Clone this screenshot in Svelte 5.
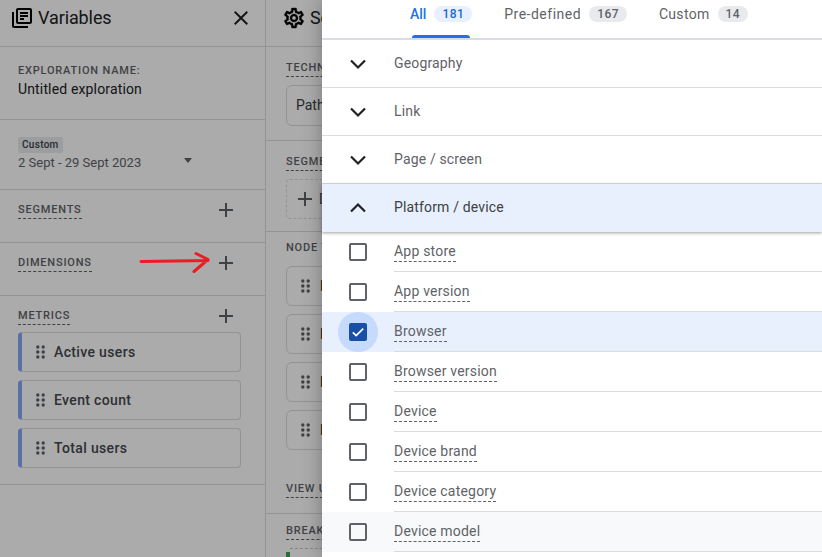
<script>
  const metrics = ['Active users', 'Event count', 'Total users'];
  const nodes = ['Event name', 'Page title', 'Page path', 'Platform'];
  const groups = ['Geography', 'Link', 'Page / screen'];
  const options = [
    { name: 'App store' },
    { name: 'App version' },
    { name: 'Browser', checked: true },
    { name: 'Browser version' },
    { name: 'Device' },
    { name: 'Device brand' },
    { name: 'Device category' },
    { name: 'Device model', hover: true }
  ];
</script>

<div class="page">
  <aside class="variables">
    <header class="head">
      <svg class="head-icon" viewBox="0 0 24 24" width="24" height="24"><path d="M4 6H2v14c0 1.100.9 2 2 2h14v-2H4V6zm16-4H8c-1.100 0-2 .9-2 2v12c0 1.100.9 2 2 2h12c1.100 0 2-.9 2-2V4c0-1.100-.9-2-2-2zm0 14H8V4h12v12zM10 9h8v2h-8V9zm0 3h4v2h-4v-2zm0-6h8v2h-8V6z"/></svg>
      <h1>Variables</h1>
      <svg class="close" viewBox="0 0 24 24" width="24" height="24"><path d="M19 6.410 17.590 5 12 10.590 6.410 5 5 6.410 10.590 12 5 17.590 6.410 19 12 13.410 17.590 19 19 17.590 13.410 12z"/></svg>
    </header>
    <section class="name">
      <div class="label">EXPLORATION NAME:</div>
      <div class="value">Untitled exploration</div>
    </section>
    <section class="date">
      <span class="chip">Custom</span>
      <div class="date-row"><span>2 Sept - 29 Sept 2023</span><i class="caret"></i></div>
    </section>
    <section class="var-row"><span class="label dashed">SEGMENTS</span><svg class="plus" viewBox="0 0 24 24" width="24" height="24"><path d="M19 13h-6v6h-2v-6H5v-2h6V5h2v6h6z"/></svg></section>
    <section class="var-row"><span class="label dashed">DIMENSIONS</span><svg class="plus" viewBox="0 0 24 24" width="24" height="24"><path d="M19 13h-6v6h-2v-6H5v-2h6V5h2v6h6z"/></svg></section>
    <section class="metrics">
      <div class="var-row inner"><span class="label dashed">METRICS</span><svg class="plus" viewBox="0 0 24 24" width="24" height="24"><path d="M19 13h-6v6h-2v-6H5v-2h6V5h2v6h6z"/></svg></div>
      {#each metrics as m}
        <div class="pill"><svg class="grip" viewBox="0 0 9 14" width="9" height="14"><circle cx="1.800" cy="2" r="1.700"/><circle cx="7.200" cy="2" r="1.700"/><circle cx="1.800" cy="7" r="1.700"/><circle cx="7.200" cy="7" r="1.700"/><circle cx="1.800" cy="12" r="1.700"/><circle cx="7.200" cy="12" r="1.700"/></svg>{m}</div>
      {/each}
    </section>
  </aside>

  <aside class="settings">
    <div class="settings-inner">
      <header class="head settings-head">
        <svg class="head-icon gear" viewBox="0 0 24 24" width="24" height="24"><path d="M19.430 12.980c.04-.32.07-.64.07-.98 0-.34-.03-.66-.07-.98l2.110-1.650c.19-.15.24-.42.12-.64l-2-3.460c-.09-.16-.26-.25-.44-.25-.06 0-.12.01-.17.030l-2.490 1c-.52-.4-1.080-.73-1.690-.98l-.38-2.650C14.460 2.180 14.250 2 14 2h-4c-.25 0-.46.18-.49.42l-.38 2.650c-.61.25-1.170.59-1.690.98l-2.490-1c-.06-.02-.12-.03-.18-.03-.17 0-.34.09-.43.25l-2 3.460c-.13.22-.07.49.12.64l2.110 1.650c-.04.32-.07.65-.07.98 0 .33.03.66.07.98l-2.110 1.650c-.19.15-.24.42-.12.64l2 3.460c.09.16.26.25.44.25.06 0 .12-.01.17-.03l2.490-1c.52.4 1.080.73 1.690.98l.38 2.650c.03.24.24.42.49.42h4c.25 0 .46-.18.49-.42l.38-2.650c.61-.25 1.170-.59 1.690-.98l2.490 1c.06.02.12.03.18.03.17 0 .34-.09.43-.25l2-3.460c.12-.22.07-.49-.12-.64l-2.110-1.650zm-1.980-1.710c.04.31.05.52.05.73 0 .21-.02.43-.05.73l-.14 1.130.89.7 1.080.84-.7 1.210-1.270-.51-1.040-.42-.9.68c-.43.32-.84.56-1.250.73l-1.060.43-.16 1.130-.2 1.350h-1.400l-.19-1.350-.16-1.130-1.060-.43c-.43-.18-.83-.41-1.230-.71l-.91-.7-1.060.43-1.270.51-.7-1.210 1.080-.84.89-.7-.14-1.130c-.03-.31-.05-.54-.05-.74s.02-.43.05-.73l.14-1.130-.89-.7-1.080-.84.7-1.210 1.270.51 1.040.42.9-.68c.43-.32.84-.56 1.250-.73l1.060-.43.16-1.130.2-1.350h1.390l.19 1.350.16 1.130 1.060.43c.43.18.83.41 1.230.71l.91.7 1.060-.43 1.270-.51.7 1.210-1.070.85-.89.7.14 1.130zM12 8c-2.210 0-4 1.790-4 4s1.790 4 4 4 4-1.790 4-4-1.790-4-4-4zm0 6c-1.100 0-2-.9-2-2s.9-2 2-2 2 .9 2 2-.9 2-2 2z"/></svg>
        <h1>Settings</h1>
      </header>
      <section class="technique">
        <span class="label dashed">TECHNIQUE</span>
        <div class="field">Path exploration</div>
      </section>
      <section class="seg">
        <span class="label dashed">SEGMENT</span>
        <div class="drop"><svg class="plus" viewBox="0 0 24 24" width="24" height="24"><path d="M19 13h-6v6h-2v-6H5v-2h6V5h2v6h6z"/></svg><span>Drop segment</span></div>
      </section>
      <section class="nodes">
        <span class="label">NODE TYPE</span>
        {#each nodes as n}
          <div class="node"><svg class="grip" viewBox="0 0 9 14" width="9" height="14"><circle cx="1.800" cy="2" r="1.700"/><circle cx="7.200" cy="2" r="1.700"/><circle cx="1.800" cy="7" r="1.700"/><circle cx="7.200" cy="7" r="1.700"/><circle cx="1.800" cy="12" r="1.700"/><circle cx="7.200" cy="12" r="1.700"/></svg><span>{n}</span></div>
        {/each}
        <span class="label dashed view">VIEW USERS</span>
      </section>
      <section class="breakdown">
        <span class="label dashed">BREAKDOWN</span>
        <i class="track"></i>
        <i class="bar"></i>
      </section>
    </div>
  </aside>

  <div class="scrim"></div>

  <svg class="annotation" viewBox="0 0 72 24" width="72" height="24"><path d="M2 11.500C24 11 46 11 69 10.500M57 3.500 69 9.500 55 21.500" fill="none" stroke="#ed1c24" stroke-width="3" stroke-linecap="round" stroke-linejoin="round"/></svg>

  <div class="drawer">
    <nav class="tabs">
      <div class="tab active"><span>All</span><b>181</b></div>
      <div class="tab wide"><span>Pre-defined</span><b>167</b></div>
      <div class="tab"><span>Custom</span><b>14</b></div>
    </nav>
    {#each groups as g}
      <div class="group">
        <svg class="chev" viewBox="0 0 32 32" width="32" height="32"><path d="M9 13.500 16 20.500 23 13.500"/></svg>
        <span>{g}</span>
      </div>
    {/each}
    <div class="group open">
      <svg class="chev" viewBox="0 0 32 32" width="32" height="32"><path d="M9 20.500 16 13.500 23 20.500"/></svg>
      <span>Platform / device</span>
    </div>
    {#each options as o}
      <div class="option" class:checked={o.checked} class:hover={o.hover}>
        <div class="box-cell">
          {#if o.checked}
            <i class="halo"></i>
            <svg class="box" viewBox="0 0 18 18" width="18" height="18"><rect width="18" height="18" rx="2" fill="#174ea6"/><path d="M3.800 9.300 7.200 12.600 14.200 5.600" fill="none" stroke="#fff" stroke-width="1.800"/></svg>
          {:else}
            <i class="empty"></i>
          {/if}
        </div>
        <div class="opt-text"><span>{o.name}</span></div>
      </div>
    {/each}
  </div>
</div>

<style>
  :global(body) { margin: 0; background: #fff; }
  .page {
    position: relative;
    width: 822px;
    height: 557px;
    overflow: hidden;
    display: flex;
    font-family: Roboto, "Liberation Sans", sans-serif;
    color: #202124;
    background: #fff;
  }
  .variables { width: 265px; flex: none; border-right: 1px solid #dadce0; }
  .settings { width: 56px; flex: none; overflow: hidden; }
  .settings-inner { width: 300px; }
  .head {
    height: 36px;
    padding: 0 12px 10px 10px;
    display: flex;
    align-items: center;
    border-bottom: 1px solid #dadce0;
  }
  h1 { margin: 0 0 0 2px; font: 400 18px/24px Roboto, sans-serif; letter-spacing: -.1px; }
  .head-icon { flex: none; fill: #000; margin-right: 2px; }
  .gear { stroke: #000; stroke-width: .4; }
  .close { margin-left: auto; fill: #202124; }
  .settings-head { padding-left: 16px; }
  section { border-bottom: 1px solid #dadce0; padding-left: 18px; padding-right: 27px; }
  .label {
    font: 500 11px/16px Roboto, sans-serif;
    letter-spacing: .8px;
    color: #5f6368;
    display: inline-block;
  }
  .dashed { border-bottom: 1px dashed #5f6368; }
  .name { height: 56px; padding-top: 16px; }
  .name .label { display: block; }
  .value { font-size: 14px; line-height: 20px; letter-spacing: .15px; }
  .date { height: 52px; padding-top: 17px; }
  .chip {
    display: block;
    width: fit-content;
    background: #e8eaed;
    color: #3c4043;
    font: 500 10px/16px Roboto, sans-serif;
    letter-spacing: .3px;
    padding: 0 4px;
    border-radius: 2px;
  }
  .date-row {
    display: flex;
    font-size: 13px;
    line-height: 18px;
    color: #5f6368;
    align-items: center;
    margin-top: 1px;
  }
  .caret {
    margin-left: 43px;
    margin-top: -5px;
    border: 4.500px solid transparent;
    border-top: 5px solid #5f6368;
    border-bottom: 0;
  }
  .var-row {
    height: 44px;
    padding-top: 8px;
    display: flex;
    align-items: flex-start;
    justify-content: space-between;
  }
  .var-row .label { margin-top: 4px; }
  .var-row.inner { height: 28px; }
  .plus { fill: #5f6368; flex: none; }
  .metrics { height: 188px; }
  .pill {
    box-sizing: border-box;
    width: 223px;
    height: 40px;
    margin-bottom: 8px;
    border: 1px solid #dadce0;
    border-left: 4px solid #83abf8;
    border-radius: 4px;
    display: flex;
    align-items: center;
    gap: 9px;
    padding-left: 14px;
    font-size: 14px;
    font-weight: 500;
    color: #45484c;
    letter-spacing: .35px;
  }
  .grip { fill: #5f6368; flex: none; }
  .technique, .seg, .nodes, .breakdown { padding-left: 20px; padding-right: 20px; }
  .technique > .label, .seg > .label { display: table; }
  .technique { height: 80px; padding-top: 13px; }
  .field {
    margin-top: 8px;
    height: 41px;
    line-height: 38px;
    box-sizing: border-box;
    border: 1px solid #dadce0;
    border-radius: 6px;
    font-size: 14px;
    padding-left: 9px;
    color: #3c4043;
  }
  .seg { height: 77px; padding-top: 13px; }
  .drop {
    margin-top: 8px;
    height: 40px;
    box-sizing: border-box;
    border: 1px dashed #dadce0;
    border-radius: 4px;
    display: flex;
    align-items: center;
    padding-left: 6px;
    gap: 2px;
    font-size: 14px;
    color: #3c4043;
  }
  .nodes { height: 273px; padding-top: 8px; }
  .nodes > .label { display: table; }
  .node {
    box-sizing: border-box;
    height: 40px;
    margin-top: 8px;
    border: 1px solid #dadce0;
    border-radius: 6px;
    display: flex;
    align-items: center;
    gap: 10px;
    padding-left: 14px;
    font-size: 14px;
    font-weight: 500;
    color: #3c4043;
  }
  .nodes > .label + .node { margin-top: 10px; }
  .nodes > .view { margin-top: 31px; }
  .breakdown { border: 0; padding-top: 9px; }
  .breakdown .label { display: table; }
  .track { display: block; margin: 8px 0 0 4px; border-top: 1px dashed #c4c7ca; }
  .bar { display: block; width: 4px; height: 6px; margin-top: 3px; background: #34a853; }

  .scrim {
    position: absolute;
    inset: 0;
    background: rgba(0, 0, 0, .33);
  }
  .annotation { position: absolute; left: 139px; top: 250px; }

  .drawer {
    position: absolute;
    left: 322px;
    top: 0;
    bottom: 0;
    width: 500px;
    background: #fff;
    box-shadow: 0 0 18px rgba(0, 0, 0, .3);
  }
  .tabs {
    height: 38px;
    display: flex;
    border-bottom: 2px solid #dadce0;
    padding-left: 88px;
    gap: 32px;
  }
  .tab {
    display: flex;
    align-items: flex-start;
    gap: 8px;
    height: 38px;
    font-size: 14px;
    line-height: 28px;
    color: #5f6368;
    position: relative;
  }
  .tab span { letter-spacing: .3px; }
  .tab.active span { letter-spacing: 0; }
  .tab.wide span { letter-spacing: .5px; }
  .tab b {
    font-size: 12px;
    font-weight: 500;
    line-height: 16px;
    height: 16px;
    margin-top: 6px;
    padding: 0 8px;
    border-radius: 8px;
    background: #e8eaed;
    letter-spacing: .45px;
  }
  .tab.active { color: #1a73e8; font-weight: 500; }
  .tab.active b { background: #e8f0fe; color: #1967d2; }
  .tab.active::after {
    content: "";
    position: absolute;
    left: 2px;
    right: 2px;
    bottom: 0;
    height: 3px;
    border-radius: 3px 3px 0 0;
    background: #1a73e8;
  }
  .group {
    height: 45px;
    padding: 0 0 2px 20px;
    display: flex;
    align-items: center;
    border-bottom: 1px solid #dadce0;
    font-size: 14px;
    color: #5f6368;
    letter-spacing: .15px;
  }
  .group span { margin-left: 20px; }
  .chev { fill: none; stroke: #202124; stroke-width: 2.200; flex: none; }
  .open {
    position: relative;
    background: #e8f0fe;
    color: #3c4043;
    border-bottom: 0;
    height: 46px;
    box-shadow: 0 1px 3px rgba(60, 64, 67, .5);
  }
  .option { height: 40px; display: flex; font-size: 14px; color: #5f6368; letter-spacing: .2px; }
  .option.checked { background: #e8f0fe; }
  .option.hover { background: #f8f9fa; }
  .box-cell {
    width: 72px;
    flex: none;
    display: flex;
    align-items: center;
    justify-content: center;
    position: relative;
  }
  .empty {
    width: 18px;
    height: 18px;
    box-sizing: border-box;
    border: 2px solid #5f6368;
    border-radius: 2px;
  }
  .halo {
    position: absolute;
    left: 16px;
    top: 0;
    width: 40px;
    height: 40px;
    border-radius: 50%;
    background: #c6dafc;
  }
  .box { position: relative; }
  .opt-text {
    flex: 1;
    height: 40px;
    box-sizing: border-box;
    border-bottom: 1px solid #dadce0;
  }
  .opt-text span { display: inline-block; line-height: 19px; border-bottom: 1px dashed #5f6368; margin-top: 10px; vertical-align: top; }
</style>
